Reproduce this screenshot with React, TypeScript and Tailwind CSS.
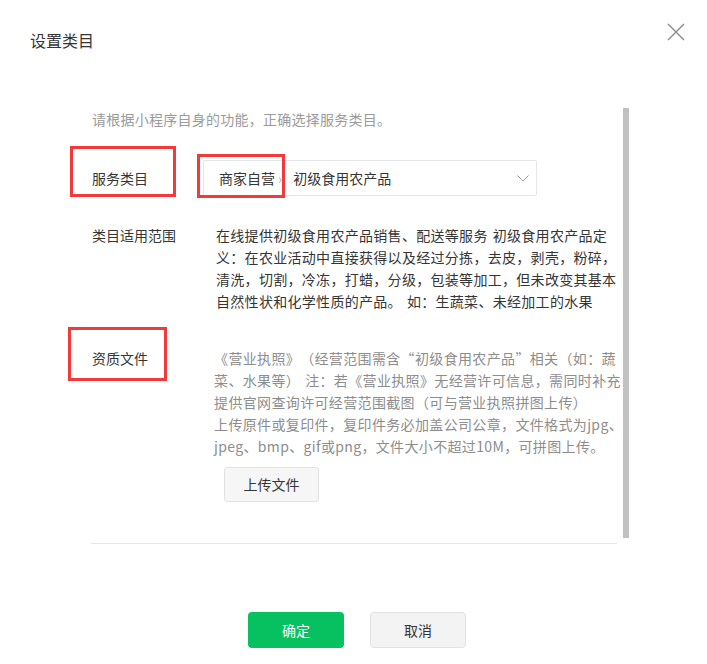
import React from 'react';

const descLines = [
  '在线提供初级食用农产品销售、配送等服务 初级食用农产品定',
  '义：在农业活动中直接获得以及经过分拣，去皮，剥壳，粉碎，',
  '清洗，切割，冷冻，打蜡，分级，包装等加工，但未改变其基本',
  '自然性状和化学性质的产品。 如：生蔬菜、未经加工的水果',
];

const qualLines = [
  '《营业执照》（经营范围需含“初级食用农产品”相关（如：蔬',
  '菜、水果等） 注：若《营业执照》无经营许可信息，需同时补充',
  '提供官网查询许可经营范围截图（可与营业执照拼图上传）',
  '上传原件或复印件，复印件务必加盖公司公章，文件格式为jpg、',
  'jpeg、bmp、gif或png，文件大小不超过10M，可拼图上传。',
];

function Line({ text }: { text: string }) {
  const parts = text.split(' ');
  return (
    <div className="whitespace-nowrap">
      {parts.map((p, i) => (
        <React.Fragment key={i}>
          {i > 0 && <span className="inline-block w-[5px]" />}
          {p}
        </React.Fragment>
      ))}
    </div>
  );
}

function CloseIcon() {
  return (
    <svg width="18" height="18" viewBox="0 0 18 18" fill="none">
      <path d="M1 1L17 17M17 1L1 17" stroke="#8a8a8a" strokeWidth="1.4" />
    </svg>
  );
}

function Chevron() {
  return (
    <svg width="12" height="7" viewBox="0 0 12 7" fill="none">
      <path d="M0.5 0.5L6 6L11.5 0.5" stroke="#9a9a9a" strokeWidth="1" />
    </svg>
  );
}

export default function App() {
  return (
    <div className="relative w-[707px] h-[664px] bg-white overflow-hidden font-['Noto_Sans_CJK_SC',sans-serif] text-[14px] text-[#353535] [text-spacing-trim:space-all]">
      {/* header */}
      <div className="flex justify-between h-[108px] pl-[30px] pr-[22px]">
        <div className="pt-[29px] text-[16px] leading-[22px] text-[#353535]">设置类目</div>
        <div className="pt-[23px]">
          <CloseIcon />
        </div>
      </div>

      {/* body */}
      <div className="ml-[91px] w-[538px] h-[430px] flex">
        <div className="flex-1 pl-[1px] overflow-hidden">
          <div className="leading-[22px] text-[#9a9a9a] tracking-[0.25px]">
            请根据小程序自身的功能，正确选择服务类目。
          </div>

          <div className="mt-[30px] flex items-center h-[36px]">
            <div className="w-[111px] leading-[22px]">服务类目</div>
            <div className="w-[334px] h-[36px] border border-[#e4e6eb] rounded-[2px] flex items-center pl-[15px] pr-[7px]">
              <span className="leading-[22px]">商家自营</span>
              <span className="pl-[3px] pr-[11px] text-[#b0b0b0] leading-[22px]">›</span>
              <span className="flex-1 leading-[22px]">初级食用农产品</span>
              <Chevron />
            </div>
          </div>

          <div className="mt-[28px] flex">
            <div className="w-[111px] leading-[22px]">类目适用范围</div>
            <div className="pl-[13px] leading-[22px] tracking-[0.3px] text-[#353535]">
              {descLines.map((line, i) => (
                <Line key={i} text={line} />
              ))}
            </div>
          </div>

          <div className="mt-[35px] flex">
            <div className="w-[111px] leading-[22px]">资质文件</div>
            <div className="pl-[13px]">
              <div className="leading-[22px] tracking-[0.35px] text-[#8d8d8d]">
                {qualLines.map((line, i) => (
                  <Line key={i} text={line} />
                ))}
              </div>
              <button className="mt-[10px] ml-[10px] w-[95px] h-[35px] bg-[#f6f6f6] border border-[#e2e2e2] rounded-[3px] text-[#353535] text-[14px]">
                上传文件
              </button>
            </div>
          </div>
        </div>
        <div className="w-[6px] h-full bg-[#c1c1c1]" />
      </div>

      <div className="mt-[5px] ml-[91px] w-[526px] h-px bg-[#e5e5e5]" />

      {/* footer */}
      <div className="mt-[68px] flex justify-center gap-[26px] pl-[7px]">
        <button className="w-[96px] h-[36px] rounded-[4px] bg-[#07c160] text-white text-[14px]">确定</button>
        <button className="w-[96px] h-[36px] rounded-[4px] bg-[#f3f3f3] border border-[#e2e2e2] text-[#353535] text-[14px]">
          取消
        </button>
      </div>

      {/* annotation boxes */}
      <div className="absolute left-[70px] top-[146px] w-[106px] h-[51px] border-[3px] border-[#f23a3a] pointer-events-none" />
      <div className="absolute left-[197px] top-[154px] w-[88px] h-[44px] border-[3px] border-[#f23a3a] pointer-events-none" />
      <div className="absolute left-[68px] top-[327px] w-[99px] h-[54px] border-[3px] border-[#f23a3a] pointer-events-none" />
    </div>
  );
}
